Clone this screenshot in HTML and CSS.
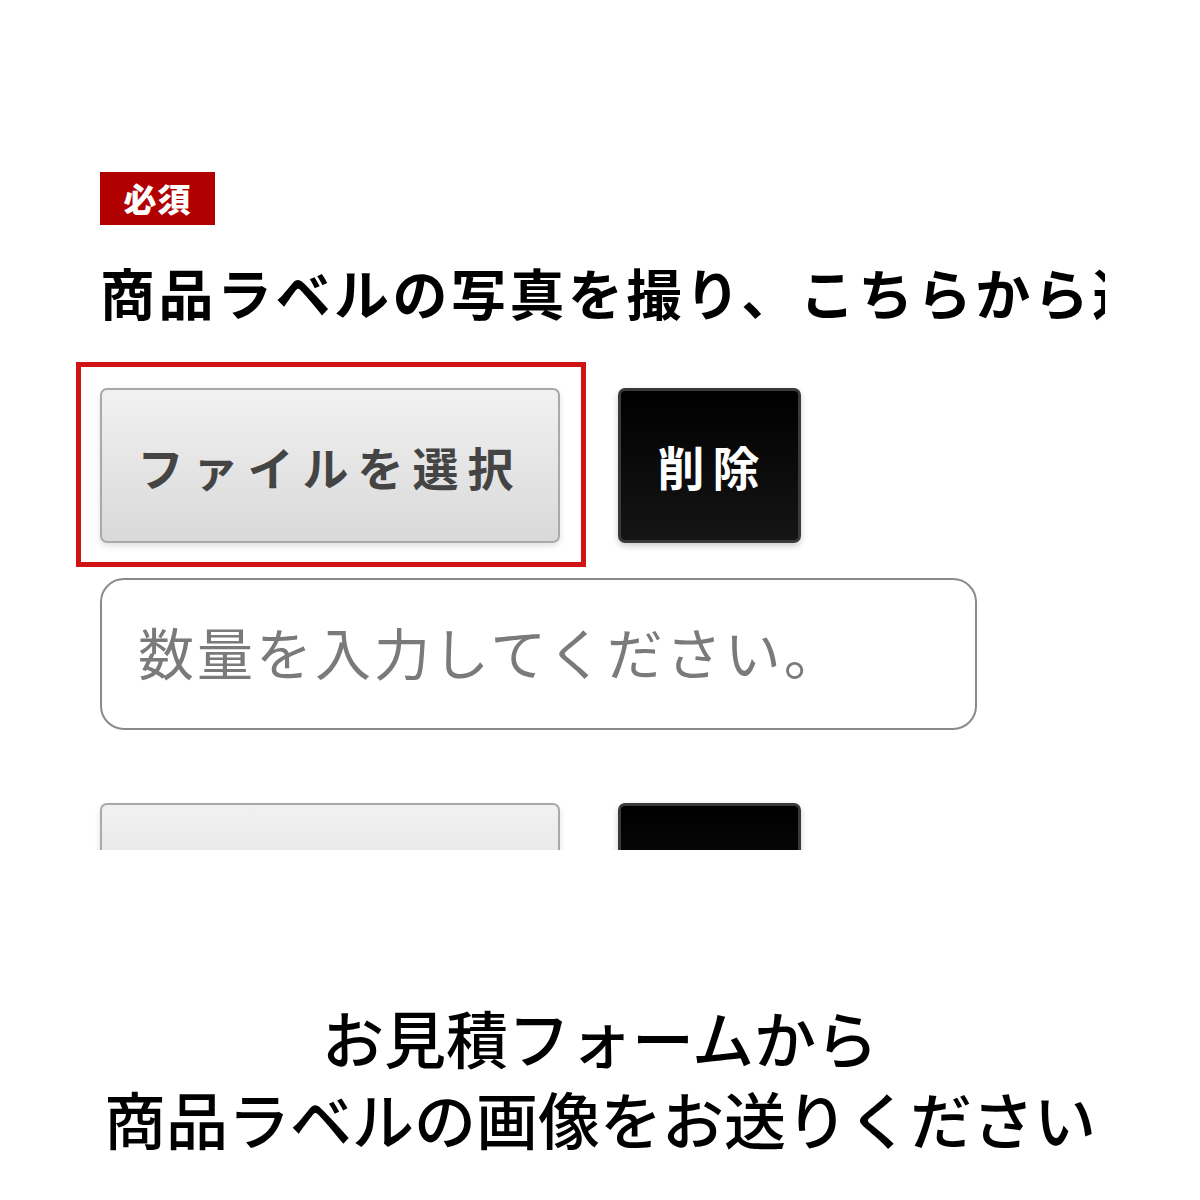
FILE: index.html
```html
<!DOCTYPE html>
<html lang="ja">
<head>
<meta charset="utf-8">
<link rel="stylesheet" href="styles.css">
</head>
<body>
<div class="panel">
  <span class="badge">必須</span>
  <div class="heading">商品ラベルの写真を撮り、こちらから送信してください。</div>
  <div class="row">
    <div class="highlight">
      <button class="file-btn">ファイルを選択</button>
    </div>
    <button class="del-btn">削除</button>
  </div>
  <input class="qty" type="text" placeholder="数量を入力してください。">
  <div class="row row2">
    <button class="file-btn">ファイルを選択</button>
    <button class="del-btn">削除</button>
  </div>
</div>
<div class="caption">
  <div>お見積フォームから</div>
  <div>商品ラベルの画像をお送りください</div>
</div>
</body>
</html>
```

FILE: styles.css
```css
* { box-sizing: border-box; }
body {
  margin: 0;
  background: #fff;
  font-family: "Noto Sans CJK JP", "Noto Sans", sans-serif;
  color: #000;
}
.panel {
  height: 850px;
  width: 1105px;
  overflow: hidden;
  padding: 172px 0 0 100px;
}
.badge {
  display: inline-block;
  background: #b00000;
  color: #fff;
  font-weight: 900;
  font-size: 33px;
  line-height: 53px;
  height: 53px;
  width: 115px;
  text-align: center;
  letter-spacing: 1px;
}
.heading {
  margin-top: 31px;
  font-size: 55px;
  line-height: 70px;
  font-weight: 700;
  letter-spacing: 3.5px;
  white-space: nowrap;
  overflow: hidden;
}
.row {
  display: flex;
  gap: 58px;
  margin-top: 62px;
}
.highlight {
  position: relative;
}
.highlight::after {
  content: "";
  position: absolute;
  left: -24px;
  top: -26px;
  right: -26px;
  bottom: -24px;
  border: 5px solid #d01414;
  pointer-events: none;
}
.file-btn {
  display: block;
  width: 460px;
  height: 155px;
  border: 2px solid #a9a9a9;
  border-radius: 7px;
  background: linear-gradient(#f1f1f1, #d9d9d9);
  box-shadow: 0 3px 6px rgba(0,0,0,0.12);
  font-family: inherit;
  font-size: 46px;
  font-weight: 700;
  color: #444;
  letter-spacing: 9px;
  padding: 0 0 0 0;
}
.del-btn {
  display: block;
  width: 183px;
  height: 155px;
  border: 3px solid #3a3a3a;
  border-radius: 7px;
  background: linear-gradient(#000, #151515);
  box-shadow: 0 3px 6px rgba(0,0,0,0.2);
  font-family: inherit;
  font-size: 47px;
  font-weight: 700;
  color: #fff;
  letter-spacing: 8px;
  padding: 0 0 0 6px;
}
.qty {
  display: block;
  margin-top: 35px;
  width: 877px;
  height: 152px;
  border: 2px solid #8a8a8a;
  border-radius: 24px;
  padding: 0 0 8px 36px;
  font-family: inherit;
  font-size: 56px;
  color: #333;
  background: #fff;
  outline: none;
}
.qty::placeholder {
  color: #7a7a7a;
  letter-spacing: 3px;
}
.row2 {
  margin-top: 73px;
}
.caption {
  margin-top: 147px;
  text-align: center;
  font-size: 62px;
  line-height: 81px;
  font-weight: 500;
  color: #000;
}
```
